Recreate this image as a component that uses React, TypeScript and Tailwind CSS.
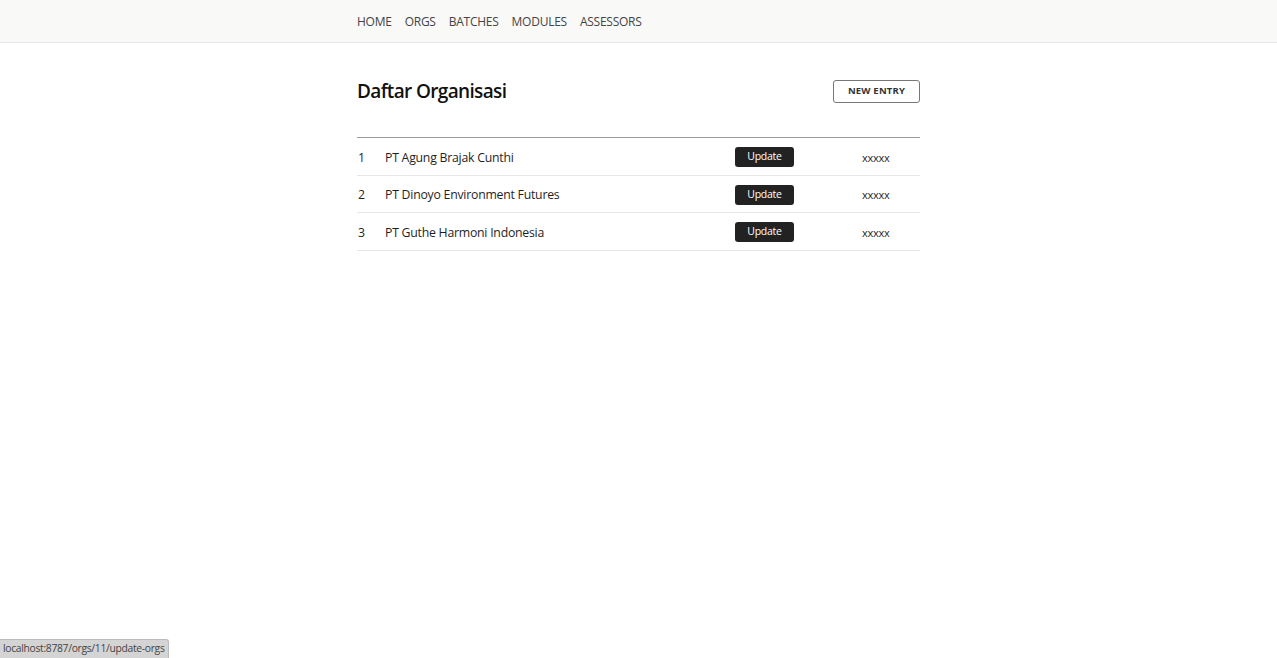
import React from "react";

const orgs = [
  { id: 1, name: "PT Agung Brajak Cunthi" },
  { id: 2, name: "PT Dinoyo Environment Futures" },
  { id: 3, name: "PT Guthe Harmoni Indonesia" },
];

const navItems = ["HOME", "ORGS", "BATCHES", "MODULES", "ASSESSORS"];

export default function App() {
  return (
    <div
      className="relative min-h-[658px] bg-white text-[#1f1f1f]"
      style={{ fontFamily: '"Open Sans", "Noto Sans", sans-serif' }}
    >
      <nav className="h-[43px] bg-[#f9f9f8] border-b border-[#e4e4e4]">
        <div className="w-[563px] mx-auto flex items-center h-full pt-[1px] gap-[13px] text-[12px] text-[#444] tracking-[-0.25px]">
          {navItems.map((item) => (
            <a key={item} href="#" className="hover:text-black">
              {item}
            </a>
          ))}
        </div>
      </nav>

      <main className="w-[563px] mx-auto">
        <div className="flex items-center justify-between h-[28px] mt-[34px] mb-[32px]">
          <h1 className="text-[19px] font-semibold tracking-[-0.65px] text-[#111]">Daftar Organisasi</h1>
          <button className="h-[23px] w-[87px] border border-[#777] rounded-[3px] text-[9.5px] font-bold text-[#333] tracking-[0.2px]">
            NEW ENTRY
          </button>
        </div>

        <table className="w-full border-t border-[#999] text-[12.3px] tracking-[-0.25px]">
          <tbody>
            {orgs.map((org) => (
              <tr key={org.id} className="h-[37.5px] border-b border-[#e6e6e6]">
                <td className="w-[28px] pl-[1px] pt-[3px]">{org.id}</td>
                <td className="pt-[3px]">{org.name}</td>
                <td className="w-[127px] pt-[2px]">
                  <button className="h-[20px] w-[59px] bg-[#222] text-white rounded-[3px] text-[10.5px]">
                    Update
                  </button>
                </td>
                <td className="w-[58px] pt-[3px] text-[11px]">xxxxx</td>
              </tr>
            ))}
          </tbody>
        </table>
      </main>

      <div className="absolute left-0 bottom-0 h-[19px] px-[3px] flex items-center bg-[#d4d4d4] border-t border-r border-[#bbb] text-[10.3px] text-[#444] rounded-tr-[3px] tracking-[-0.3px]">
        localhost:8787/orgs/11/update-orgs
      </div>
    </div>
  );
}
